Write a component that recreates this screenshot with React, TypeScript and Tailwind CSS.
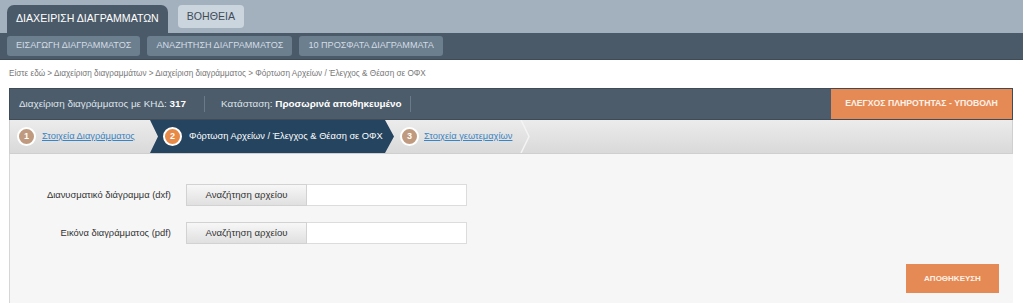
export default function App() {
  const font = { fontFamily: '"Liberation Sans", Arial, sans-serif' };

  return (
    <div className="w-[1023px] h-[303px] overflow-hidden bg-white" style={font}>
      {/* Top navigation */}
      <div className="h-[33px] bg-[#a3b0bd] flex items-end gap-[10px] pl-[7px]">
        <div className="h-[28px] px-[9px] rounded-t-[7px] bg-[#4b5a68] text-white text-[10.6px] flex items-center whitespace-nowrap">
          ΔΙΑΧΕΙΡΙΣΗ ΔΙΑΓΡΑΜΜΑΤΩΝ
        </div>
        <div className="h-[23px] mb-[5px] px-[9px] rounded-[4px] bg-[#cbd5de] text-[#3f4c58] text-[10.6px] flex items-center">
          ΒΟΗΘΕΙΑ
        </div>
      </div>
      <div className="h-[27px] bg-[#4b5a68] flex items-center gap-[7px] pl-[7px] border-b border-[#3e4a55]">
        {["ΕΙΣΑΓΩΓΗ ΔΙΑΓΡΑΜΜΑΤΟΣ", "ΑΝΑΖΗΤΗΣΗ ΔΙΑΓΡΑΜΜΑΤΟΣ", "10 ΠΡΟΣΦΑΤΑ ΔΙΑΓΡΑΜΜΑΤΑ"].map((t) => (
          <div
            key={t}
            className="h-[20px] px-[9px] rounded-[3px] bg-[#6c7f8f] text-[#d3dce4] text-[9.1px] flex items-center whitespace-nowrap"
          >
            {t}
          </div>
        ))}
      </div>

      {/* Breadcrumb */}
      <div className="h-[28px] flex items-center pl-[9px] text-[8.2px] text-[#777] whitespace-nowrap">
        Είστε εδώ &gt; Διαχείριση διαγραμμάτων &gt; Διαχείριση διαγράμματος &gt; Φόρτωση Αρχείων / Έλεγχος &amp; Θέαση σε ΟΦΧ
      </div>

      {/* Panel */}
      <div className="ml-[9px] w-[1004px]">
        <div className="h-[32px] bg-[#4d5c6a] flex items-center border border-[#3f4c58] whitespace-nowrap">
          <div className="w-[194px] pl-[9px] text-[9.9px] text-[#dde4ea]">
            Διαχείριση διαγράμματος με ΚΗΔ: <span className="font-bold text-white">317</span>
          </div>
          <div className="w-px h-[16px] bg-[#6b7a88]" />
          <div className="w-[205px] pl-[16px] text-[9.9px] text-[#dde4ea]">
            Κατάσταση: <span className="font-bold text-white">Προσωρινά αποθηκευμένο</span>
          </div>
          <div className="w-px h-[16px] bg-[#6b7a88]" />
          <div className="ml-auto h-[30px] w-[181px] bg-[#e68a55] text-[#fdf1e8] text-[8.7px] font-bold flex items-center justify-center">
            ΕΛΕΓΧΟΣ ΠΛΗΡΟΤΗΤΑΣ - ΥΠΟΒΟΛΗ
          </div>
        </div>

        {/* Steps */}
        <div className="h-[34px] bg-gradient-to-b from-[#ececec] to-[#d9d9d9] border-x border-b border-[#cfcfcf] flex items-stretch text-[9.3px] whitespace-nowrap">
          <div className="w-[140px] flex items-center pl-[7px] gap-[6px]">
            <div className="w-[19px] h-[19px] rounded-full bg-[#bf9a7e] border-2 border-white text-white text-[9px] font-bold flex items-center justify-center">
              1
            </div>
            <span className="text-[#3b84c2] underline">Στοιχεία Διαγράμματος</span>
          </div>
          <div className="w-[244px] bg-[#25445f] flex items-center pl-[13px] gap-[7px] [clip-path:polygon(0_0,calc(100%-9px)_0,100%_50%,calc(100%-9px)_100%,0_100%,8px_50%)]">
            <div className="w-[19px] h-[19px] rounded-full bg-[#e78a47] border-2 border-white text-white text-[9px] font-bold flex items-center justify-center">
              2
            </div>
            <span className="text-white">Φόρτωση Αρχείων / Έλεγχος &amp; Θέαση σε ΟΦΧ</span>
          </div>
          <div className="relative w-[136px] flex items-center pl-[6px] gap-[5px]">
            <div className="w-[19px] h-[19px] rounded-full bg-[#bf9a7e] border-2 border-white text-white text-[9px] font-bold flex items-center justify-center">
              3
            </div>
            <span className="text-[#3b84c2] underline">Στοιχεία γεωτεμαχίων</span>
            <svg className="absolute right-0 top-0" width="10" height="33" viewBox="0 0 10 33">
              <polyline points="1,0 9,16.5 1,33" fill="none" stroke="#f4f4f4" strokeWidth="1.5" />
            </svg>
          </div>
        </div>

        {/* Content */}
        <div className="h-[150px] bg-[#f6f6f6] border-l border-[#d6d6d6] pt-[30px]">
          <div className="flex flex-col gap-[16px] text-[9.4px] text-[#333]">
            {["Διανυσματικό διάγραμμα (dxf)", "Εικόνα διαγράμματος (pdf)"].map((l) => (
              <div key={l} className="flex items-center">
                <div className="w-[161px] text-right whitespace-nowrap">{l}</div>
                <div className="ml-[15px] h-[22px] w-[121px] bg-gradient-to-b from-[#f7f7f7] to-[#e0e0e0] border border-[#d2d2d2] flex items-center justify-center text-[9.6px] text-[#333]">
                  Αναζήτηση αρχείου
                </div>
                <div className="h-[22px] w-[160px] bg-white border border-[#dcdcdc] border-l-0" />
              </div>
            ))}
          </div>
          <div className="flex justify-end pr-[14px] mt-[20px]">
            <div className="h-[29px] w-[93px] bg-[#e68a55] text-[#fdf1e8] text-[8px] font-bold flex items-center justify-center">
              ΑΠΟΘΗΚΕΥΣΗ
            </div>
          </div>
        </div>
      </div>
    </div>
  );
}
